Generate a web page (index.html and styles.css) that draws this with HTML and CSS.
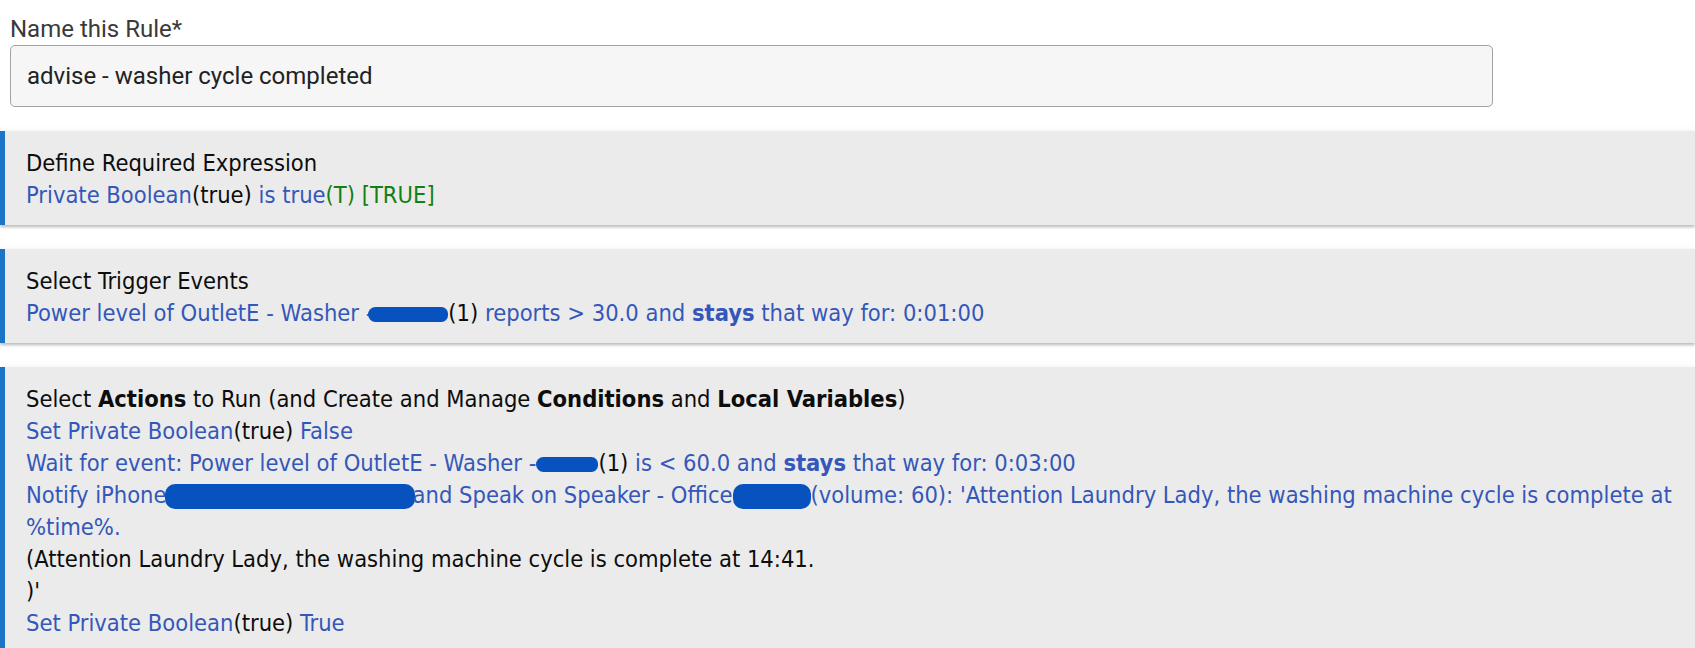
FILE: index.html
```html
<!DOCTYPE html>
<html lang="en">
<head>
<meta charset="utf-8">
<title>Rule</title>
<link rel="stylesheet" href="styles.css">
</head>
<body>
<div class="field">
  <label class="field-label" for="rule-name">Name this Rule*</label>
  <input class="text-input" id="rule-name" type="text" value="advise - washer cycle completed">
</div>

<section class="card">
  <div class="line">Define Required Expression</div>
  <div class="line"><span class="blue">Private Boolean</span>(true)<span class="blue"> is true</span><span class="green">(T) [TRUE]</span></div>
</section>

<section class="card">
  <div class="line">Select Trigger Events</div>
  <div class="line blue">Power level of OutletE - Washer -<span class="redact redact-sm redact-trigger"></span><span class="black">(1)</span> reports &gt; 30.0 and <b>stays</b> that way for: 0:01:00</div>
</section>

<section class="card">
  <div class="line">Select <b>Actions</b> to Run (and Create and Manage <b>Conditions</b> and <b>Local Variables</b>)</div>
  <div class="line"><span class="blue">Set Private Boolean</span>(true)<span class="blue"> False</span></div>
  <div class="line blue">Wait for event: Power level of OutletE - Washer -<span class="redact redact-sm redact-wait"></span><span class="black">(1)</span> is &lt; 60.0 and <b>stays</b> that way for: 0:03:00</div>
  <div class="line blue">Notify iPhone<span class="redact redact-lg redact-phone"></span>and Speak on Speaker - Office<span class="redact redact-lg redact-office"></span>(volume: 60): 'Attention Laundry Lady, the washing machine cycle is complete at<br>%time%.</div>
  <div class="line">(Attention Laundry Lady, the washing machine cycle is complete at 14:41.<br>)'</div>
  <div class="line"><span class="blue">Set Private Boolean</span>(true)<span class="blue"> True</span></div>
</section>
</body>
</html>
```

FILE: styles.css
```css
html, body {
  margin: 0;
  padding: 0;
  background: #ffffff;
}

body {
  font-family: Roboto, "Liberation Sans", sans-serif;
  overflow: hidden;
}

.field {
  padding: 13px 0 0 10px;
}

.field-label {
  display: block;
  font-family: Roboto, sans-serif;
  font-size: 24px;
  line-height: 32px;
  color: #3a3a3a;
}

.text-input {
  display: block;
  box-sizing: border-box;
  width: 1483px;
  height: 62px;
  margin: 0;
  padding: 0 16px;
  border: 1px solid #a3a3a3;
  border-radius: 5px;
  background: #f6f6f6;
  font-family: Roboto, sans-serif;
  font-size: 24px;
  color: #222222;
  outline: none;
}

.card {
  margin-top: 24px;
  padding: 16px 12px 14px 21px;
  background: #ebebeb;
  border-left: 5px solid #1b74c5;
  box-shadow: 0 2px 3px rgba(0, 0, 0, 0.28), 0 -3px 5px rgba(0, 0, 0, 0.025);
  font-family: "DejaVu Sans Condensed", "DejaVu Sans", sans-serif;
  font-stretch: condensed;
  font-size: 23.5px;
  line-height: 32px;
  color: #0d0d0d;
}

.line {
  white-space: nowrap;
}

.blue {
  color: #3457b9;
}

.black {
  color: #0d0d0d;
}

.green {
  color: #138013;
}

.redact {
  display: inline-block;
  background: #0852c0;
}

.redact-sm {
  height: 15px;
  border-radius: 8px 7px 7px 8px;
  vertical-align: -1px;
}

.redact-lg {
  height: 25px;
  border-radius: 10px;
  vertical-align: -6px;
}

.redact-trigger {
  width: 80px;
  margin-left: -5px;
}

.redact-wait {
  width: 62px;
}

.redact-phone {
  width: 250px;
  margin-left: -2px;
  margin-right: -2px;
}

.redact-office {
  width: 78px;
}
```
